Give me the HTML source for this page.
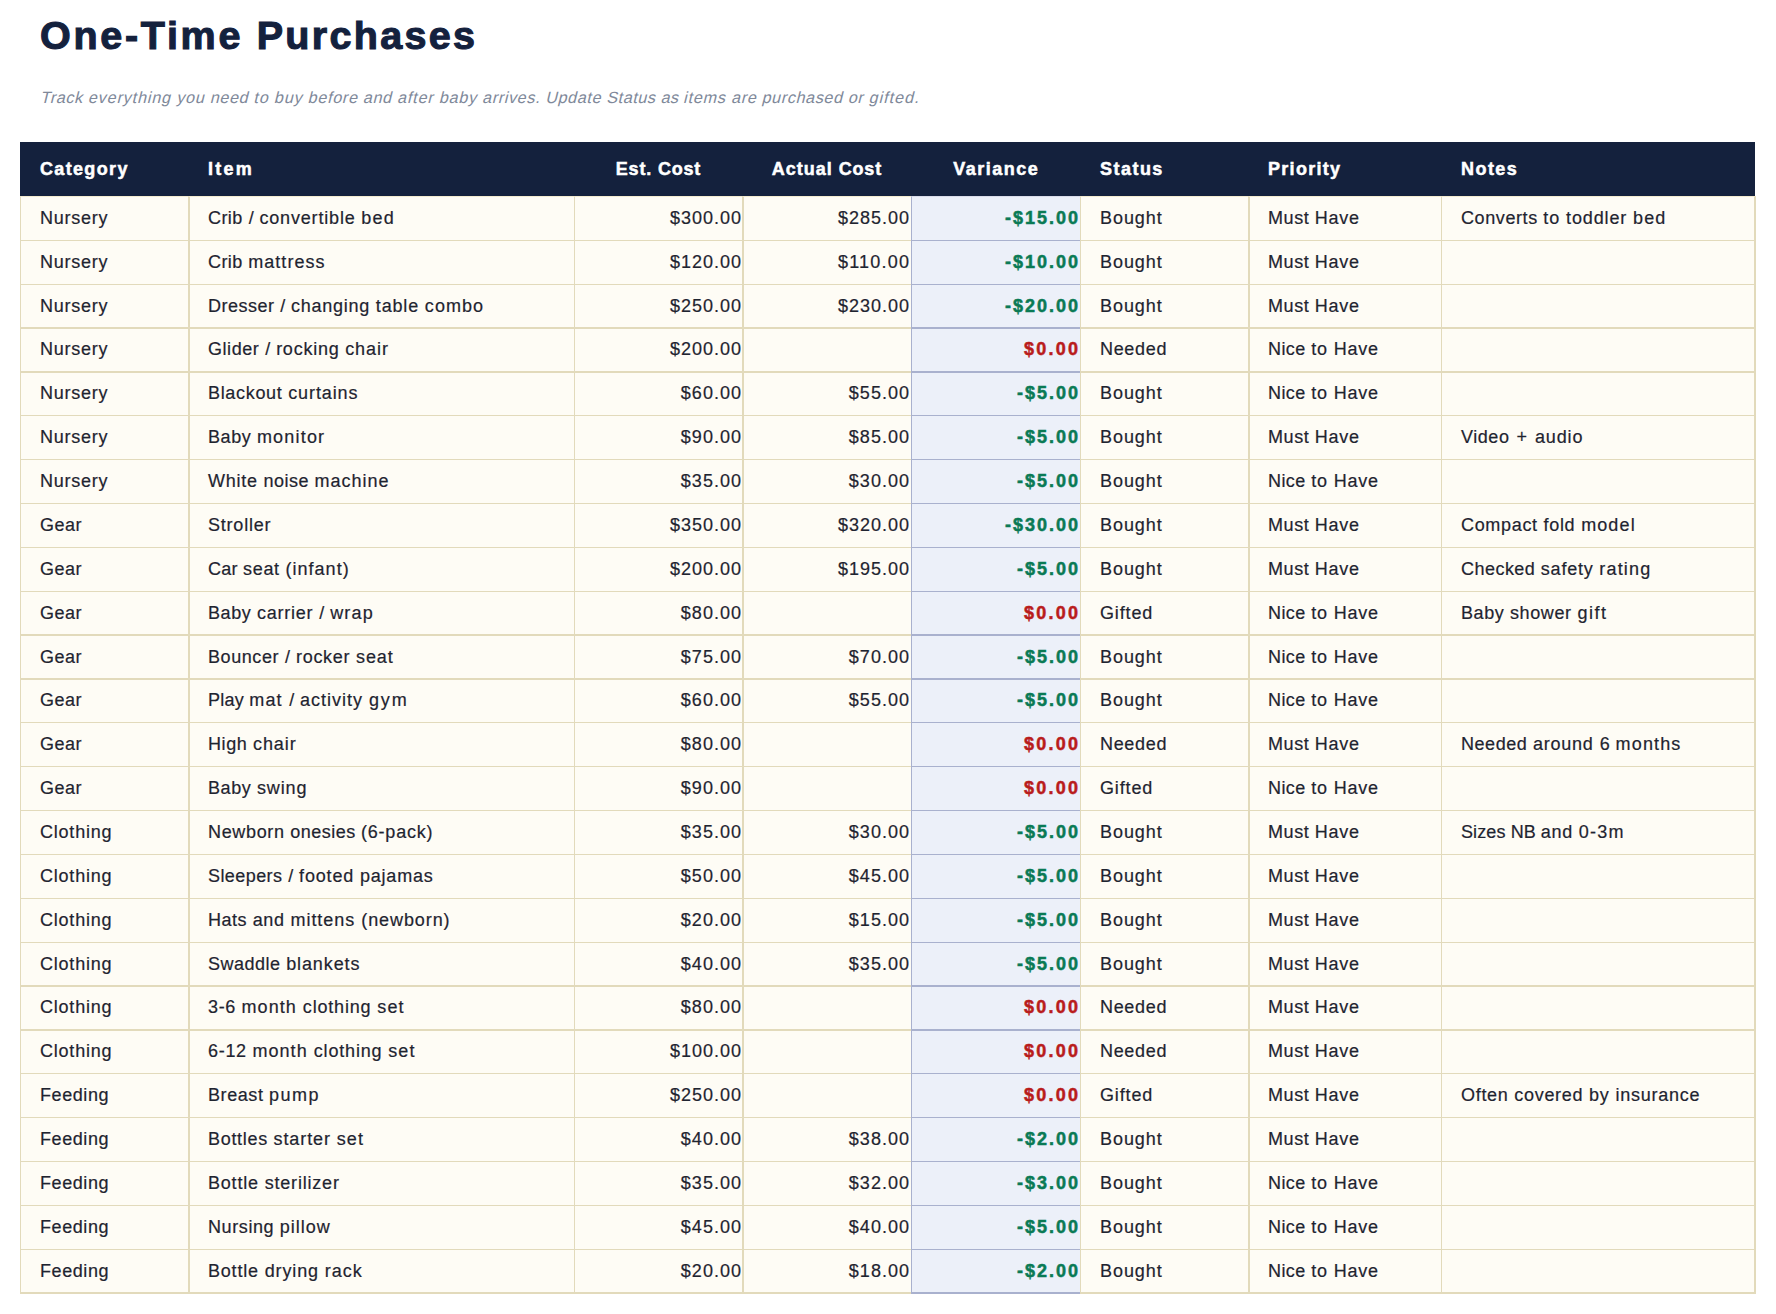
<!DOCTYPE html><html lang="en"><head><meta charset="utf-8"><title>One-Time Purchases</title><style>
*{box-sizing:border-box;margin:0;padding:0}
html,body{width:1776px;height:1314px;background:#fff;overflow:hidden}
body{font-family:"Liberation Sans", sans-serif;color:#1f2430;position:relative;}
h1{position:absolute;left:40px;top:7px;height:56px;line-height:56px;font-size:39.5px;font-weight:bold;color:#14213d;white-space:nowrap;-webkit-text-stroke:1.1px #14213d;}
p.sub{position:absolute;left:40px;top:83px;height:28px;line-height:28px;font-size:16.2px;font-style:normal;color:#80899a;white-space:nowrap;transform:skewX(-14.04deg);transform-origin:0 20px}
table{position:absolute;left:20px;top:142px;width:1736px;border-collapse:separate;border-spacing:0;table-layout:fixed;font-size:18px}
th,td{padding:0 0 0 19px;white-space:nowrap;overflow:hidden;text-align:left;vertical-align:top;line-height:20px}
th{background:#14213d;color:#fff;font-weight:bold;-webkit-text-stroke:0.5px #fff;height:54px;padding:17px 0 0 20px}
th.c{text-align:center;padding:17px 0 0 0}
td{-webkit-text-stroke:0.2px #1f2430;background:#fefcf5;border-left:1px solid #e2dabb;border-top:1px solid #e2dabb;height:44px;padding-top:11px}
td.n{text-align:right;padding:11px 1px 0 0}
td.v{background:#ecf0f9;border-left-color:#a9b1ce;border-top-color:#a9b1ce;font-weight:bold;text-align:right;padding:11px 2px 0 0}
td.b2{border-left-width:2px;padding-left:18px}
td.n.b2{padding-left:0;padding-right:2px}
td.last{border-right:2px solid #e2dabb}
th.last{border-right:1px solid #fff}
tr.first td{border-top-color:#f3ebd0}
tr.first td.v{border-top-color:#d9dcea}
tr.t2 td{border-top-width:2px;padding-top:10px}
tr.p1 td{padding-top:11px}
tr.h43 td{height:43px}
tr.h45 td{height:45px}
tr.end td{border-bottom:2px solid #e2dabb}
tr.end td.v{border-bottom-color:#a9b1ce}
.neg{color:#0a7a55;-webkit-text-stroke:0.5px currentColor;} .zero{color:#b91c1c;-webkit-text-stroke:0.5px currentColor;}
span{display:inline-block;position:relative;white-space:pre}
i{font-style:inherit}
</style></head><body>
<h1><span style="margin-right:-2.29px"><i style="letter-spacing:2.70px">One-Time </i><i style="letter-spacing:2.29px">Purchases</i></span></h1>
<p class="sub"><span style="margin-right:-0.98px"><i style="letter-spacing:0.56px">Track </i><i style="letter-spacing:0.85px">everything </i><i style="letter-spacing:0.70px">you </i><i style="letter-spacing:0.63px">need </i><i style="letter-spacing:0.83px">to </i><i style="letter-spacing:0.79px">buy </i><i style="letter-spacing:0.68px">before </i><i style="letter-spacing:0.65px">and </i><i style="letter-spacing:0.83px">after </i><i style="letter-spacing:0.73px">baby </i><i style="letter-spacing:0.62px">arrives. </i><i style="letter-spacing:0.62px">Update </i><i style="letter-spacing:0.56px">Status </i><i style="letter-spacing:0.30px">as </i><i style="letter-spacing:0.81px">items </i><i style="letter-spacing:0.61px">are </i><i style="letter-spacing:0.62px">purchased </i><i style="letter-spacing:0.63px">or </i><i style="letter-spacing:0.98px">gifted.</i></span></p>
<table><colgroup><col style="width:168px"><col style="width:386px"><col style="width:168px"><col style="width:169px"><col style="width:169px"><col style="width:168px"><col style="width:193px"><col style="width:315px"></colgroup>
<thead><tr>
<th><span style="letter-spacing:1.34px;margin-right:-1.34px">Category</span></th>
<th><span style="letter-spacing:2.22px;margin-right:-2.22px">Item</span></th>
<th class="c"><span style="margin-right:-0.79px"><i style="letter-spacing:0.84px">Est. </i><i style="letter-spacing:0.79px">Cost</i></span></th>
<th class="c"><span style="margin-right:-0.79px"><i style="letter-spacing:0.99px">Actual </i><i style="letter-spacing:0.79px">Cost</i></span></th>
<th class="c"><span style="letter-spacing:1.48px;margin-right:-1.48px">Variance</span></th>
<th><span style="letter-spacing:1.47px;margin-right:-1.47px">Status</span></th>
<th><span style="letter-spacing:1.29px;margin-right:-1.29px">Priority</span></th>
<th class="last"><span style="letter-spacing:1.45px;margin-right:-1.45px">Notes</span></th>
</tr></thead><tbody>
<tr class="first">
<td><span style="letter-spacing:0.76px;margin-right:-0.76px">Nursery</span></td>
<td class="b2"><span style="margin-right:-1.18px"><i style="letter-spacing:0.44px">Crib </i><i style="letter-spacing:0.42px;margin-left:0.42px">/ </i><i style="letter-spacing:0.82px">convertible </i><i style="letter-spacing:1.18px">bed</i></span></td>
<td class="n"><span style="letter-spacing:1.00px;margin-right:-1.00px">$300.00</span></td>
<td class="n b2"><span style="letter-spacing:1.00px;margin-right:-1.00px">$285.00</span></td>
<td class="v"><span class="neg" style="letter-spacing:1.98px;margin-right:-1.98px">-$15.00</span></td>
<td><span style="letter-spacing:0.94px;margin-right:-0.94px">Bought</span></td>
<td class="b2"><span style="margin-right:-0.72px"><i style="letter-spacing:0.57px">Must </i><i style="letter-spacing:0.72px">Have</i></span></td>
<td class="last"><span style="margin-right:-1.18px"><i style="letter-spacing:0.59px">Converts </i><i style="letter-spacing:0.90px">to </i><i style="letter-spacing:0.86px">toddler </i><i style="letter-spacing:1.18px">bed</i></span></td>
</tr>
<tr>
<td><span style="letter-spacing:0.76px;margin-right:-0.76px">Nursery</span></td>
<td class="b2"><span style="margin-right:-1.04px"><i style="letter-spacing:0.44px">Crib </i><i style="letter-spacing:1.04px">mattress</i></span></td>
<td class="n"><span style="letter-spacing:1.00px;margin-right:-1.00px">$120.00</span></td>
<td class="n b2"><span style="letter-spacing:1.22px;margin-right:-1.22px">$110.00</span></td>
<td class="v"><span class="neg" style="letter-spacing:1.98px;margin-right:-1.98px">-$10.00</span></td>
<td><span style="letter-spacing:0.94px;margin-right:-0.94px">Bought</span></td>
<td class="b2"><span style="margin-right:-0.72px"><i style="letter-spacing:0.57px">Must </i><i style="letter-spacing:0.72px">Have</i></span></td>
<td class="last"></td>
</tr>
<tr class="h43">
<td><span style="letter-spacing:0.76px;margin-right:-0.76px">Nursery</span></td>
<td class="b2"><span style="margin-right:-1.03px"><i style="letter-spacing:0.48px">Dresser </i><i style="letter-spacing:0.42px;margin-left:0.42px">/ </i><i style="letter-spacing:0.74px">changing </i><i style="letter-spacing:0.83px">table </i><i style="letter-spacing:1.03px">combo</i></span></td>
<td class="n"><span style="letter-spacing:1.00px;margin-right:-1.00px">$250.00</span></td>
<td class="n b2"><span style="letter-spacing:1.00px;margin-right:-1.00px">$230.00</span></td>
<td class="v"><span class="neg" style="letter-spacing:1.98px;margin-right:-1.98px">-$20.00</span></td>
<td><span style="letter-spacing:0.94px;margin-right:-0.94px">Bought</span></td>
<td class="b2"><span style="margin-right:-0.72px"><i style="letter-spacing:0.57px">Must </i><i style="letter-spacing:0.72px">Have</i></span></td>
<td class="last"></td>
</tr>
<tr class="t2">
<td><span style="letter-spacing:0.76px;margin-right:-0.76px">Nursery</span></td>
<td class="b2"><span style="margin-right:-0.93px"><i style="letter-spacing:0.55px">Glider </i><i style="letter-spacing:0.42px;margin-left:0.42px">/ </i><i style="letter-spacing:0.75px">rocking </i><i style="letter-spacing:0.93px">chair</i></span></td>
<td class="n"><span style="letter-spacing:1.00px;margin-right:-1.00px">$200.00</span></td>
<td class="n b2"></td>
<td class="v"><span class="zero" style="letter-spacing:2.21px;margin-right:-2.21px">$0.00</span></td>
<td><span style="letter-spacing:0.67px;margin-right:-0.67px">Needed</span></td>
<td class="b2"><span style="margin-right:-0.72px"><i style="letter-spacing:0.42px">Nice </i><i style="letter-spacing:0.90px">to </i><i style="letter-spacing:0.72px">Have</i></span></td>
<td class="last"></td>
</tr>
<tr class="t2">
<td><span style="letter-spacing:0.76px;margin-right:-0.76px">Nursery</span></td>
<td class="b2"><span style="margin-right:-0.90px"><i style="letter-spacing:0.68px">Blackout </i><i style="letter-spacing:0.90px">curtains</i></span></td>
<td class="n"><span style="letter-spacing:1.02px;margin-right:-1.02px">$60.00</span></td>
<td class="n b2"><span style="letter-spacing:1.02px;margin-right:-1.02px">$55.00</span></td>
<td class="v"><span class="neg" style="letter-spacing:1.99px;margin-right:-1.99px">-$5.00</span></td>
<td><span style="letter-spacing:0.94px;margin-right:-0.94px">Bought</span></td>
<td class="b2"><span style="margin-right:-0.72px"><i style="letter-spacing:0.42px">Nice </i><i style="letter-spacing:0.90px">to </i><i style="letter-spacing:0.72px">Have</i></span></td>
<td class="last"></td>
</tr>
<tr>
<td><span style="letter-spacing:0.76px;margin-right:-0.76px">Nursery</span></td>
<td class="b2"><span style="margin-right:-1.20px"><i style="letter-spacing:0.57px">Baby </i><i style="letter-spacing:1.20px">monitor</i></span></td>
<td class="n"><span style="letter-spacing:1.02px;margin-right:-1.02px">$90.00</span></td>
<td class="n b2"><span style="letter-spacing:1.02px;margin-right:-1.02px">$85.00</span></td>
<td class="v"><span class="neg" style="letter-spacing:1.99px;margin-right:-1.99px">-$5.00</span></td>
<td><span style="letter-spacing:0.94px;margin-right:-0.94px">Bought</span></td>
<td class="b2"><span style="margin-right:-0.72px"><i style="letter-spacing:0.57px">Must </i><i style="letter-spacing:0.72px">Have</i></span></td>
<td class="last"><span style="margin-right:-0.90px"><i style="letter-spacing:0.55px">Video </i><i style="letter-spacing:1.45px;margin-left:1.45px">+ </i><i style="letter-spacing:0.90px">audio</i></span></td>
</tr>
<tr>
<td><span style="letter-spacing:0.76px;margin-right:-0.76px">Nursery</span></td>
<td class="b2"><span style="margin-right:-0.97px"><i style="letter-spacing:0.74px">White </i><i style="letter-spacing:0.52px">noise </i><i style="letter-spacing:0.97px">machine</i></span></td>
<td class="n"><span style="letter-spacing:1.02px;margin-right:-1.02px">$35.00</span></td>
<td class="n b2"><span style="letter-spacing:1.02px;margin-right:-1.02px">$30.00</span></td>
<td class="v"><span class="neg" style="letter-spacing:1.99px;margin-right:-1.99px">-$5.00</span></td>
<td><span style="letter-spacing:0.94px;margin-right:-0.94px">Bought</span></td>
<td class="b2"><span style="margin-right:-0.72px"><i style="letter-spacing:0.42px">Nice </i><i style="letter-spacing:0.90px">to </i><i style="letter-spacing:0.72px">Have</i></span></td>
<td class="last"></td>
</tr>
<tr>
<td><span style="letter-spacing:0.49px;margin-right:-0.49px">Gear</span></td>
<td class="b2"><span style="letter-spacing:0.78px;margin-right:-0.78px">Stroller</span></td>
<td class="n"><span style="letter-spacing:1.00px;margin-right:-1.00px">$350.00</span></td>
<td class="n b2"><span style="letter-spacing:1.00px;margin-right:-1.00px">$320.00</span></td>
<td class="v"><span class="neg" style="letter-spacing:1.98px;margin-right:-1.98px">-$30.00</span></td>
<td><span style="letter-spacing:0.94px;margin-right:-0.94px">Bought</span></td>
<td class="b2"><span style="margin-right:-0.72px"><i style="letter-spacing:0.57px">Must </i><i style="letter-spacing:0.72px">Have</i></span></td>
<td class="last"><span style="margin-right:-1.12px"><i style="letter-spacing:0.67px">Compact </i><i style="letter-spacing:0.74px">fold </i><i style="letter-spacing:1.12px">model</i></span></td>
</tr>
<tr>
<td><span style="letter-spacing:0.49px;margin-right:-0.49px">Gear</span></td>
<td class="b2"><span style="margin-right:-1.04px"><i style="letter-spacing:0.27px">Car </i><i style="letter-spacing:0.65px">seat </i><i style="letter-spacing:1.04px">(infant)</i></span></td>
<td class="n"><span style="letter-spacing:1.00px;margin-right:-1.00px">$200.00</span></td>
<td class="n b2"><span style="letter-spacing:1.00px;margin-right:-1.00px">$195.00</span></td>
<td class="v"><span class="neg" style="letter-spacing:1.99px;margin-right:-1.99px">-$5.00</span></td>
<td><span style="letter-spacing:0.94px;margin-right:-0.94px">Bought</span></td>
<td class="b2"><span style="margin-right:-0.72px"><i style="letter-spacing:0.57px">Must </i><i style="letter-spacing:0.72px">Have</i></span></td>
<td class="last"><span style="margin-right:-1.18px"><i style="letter-spacing:0.47px">Checked </i><i style="letter-spacing:0.78px">safety </i><i style="letter-spacing:1.18px">rating</i></span></td>
</tr>
<tr class="h43">
<td><span style="letter-spacing:0.49px;margin-right:-0.49px">Gear</span></td>
<td class="b2"><span style="margin-right:-1.19px"><i style="letter-spacing:0.57px">Baby </i><i style="letter-spacing:0.75px">carrier </i><i style="letter-spacing:0.42px;margin-left:0.42px">/ </i><i style="letter-spacing:1.19px">wrap</i></span></td>
<td class="n"><span style="letter-spacing:1.02px;margin-right:-1.02px">$80.00</span></td>
<td class="n b2"></td>
<td class="v"><span class="zero" style="letter-spacing:2.21px;margin-right:-2.21px">$0.00</span></td>
<td><span style="letter-spacing:0.87px;margin-right:-0.87px">Gifted</span></td>
<td class="b2"><span style="margin-right:-0.72px"><i style="letter-spacing:0.42px">Nice </i><i style="letter-spacing:0.90px">to </i><i style="letter-spacing:0.72px">Have</i></span></td>
<td class="last"><span style="margin-right:-1.49px"><i style="letter-spacing:0.57px">Baby </i><i style="letter-spacing:0.64px">shower </i><i style="letter-spacing:1.49px">gift</i></span></td>
</tr>
<tr class="t2 p1">
<td><span style="letter-spacing:0.49px;margin-right:-0.49px">Gear</span></td>
<td class="b2"><span style="margin-right:-0.93px"><i style="letter-spacing:0.58px">Bouncer </i><i style="letter-spacing:0.42px;margin-left:0.42px">/ </i><i style="letter-spacing:0.72px">rocker </i><i style="letter-spacing:0.93px">seat</i></span></td>
<td class="n"><span style="letter-spacing:1.02px;margin-right:-1.02px">$75.00</span></td>
<td class="n b2"><span style="letter-spacing:1.02px;margin-right:-1.02px">$70.00</span></td>
<td class="v"><span class="neg" style="letter-spacing:1.99px;margin-right:-1.99px">-$5.00</span></td>
<td><span style="letter-spacing:0.94px;margin-right:-0.94px">Bought</span></td>
<td class="b2"><span style="margin-right:-0.72px"><i style="letter-spacing:0.42px">Nice </i><i style="letter-spacing:0.90px">to </i><i style="letter-spacing:0.72px">Have</i></span></td>
<td class="last"></td>
</tr>
<tr class="t2">
<td><span style="letter-spacing:0.49px;margin-right:-0.49px">Gear</span></td>
<td class="b2"><span style="margin-right:-1.91px"><i style="letter-spacing:0.26px">Play </i><i style="letter-spacing:1.12px">mat </i><i style="letter-spacing:0.42px;margin-left:0.42px">/ </i><i style="letter-spacing:0.98px">activity </i><i style="letter-spacing:1.91px">gym</i></span></td>
<td class="n"><span style="letter-spacing:1.02px;margin-right:-1.02px">$60.00</span></td>
<td class="n b2"><span style="letter-spacing:1.02px;margin-right:-1.02px">$55.00</span></td>
<td class="v"><span class="neg" style="letter-spacing:1.99px;margin-right:-1.99px">-$5.00</span></td>
<td><span style="letter-spacing:0.94px;margin-right:-0.94px">Bought</span></td>
<td class="b2"><span style="margin-right:-0.72px"><i style="letter-spacing:0.42px">Nice </i><i style="letter-spacing:0.90px">to </i><i style="letter-spacing:0.72px">Have</i></span></td>
<td class="last"></td>
</tr>
<tr>
<td><span style="letter-spacing:0.49px;margin-right:-0.49px">Gear</span></td>
<td class="b2"><span style="margin-right:-0.93px"><i style="letter-spacing:0.59px">High </i><i style="letter-spacing:0.93px">chair</i></span></td>
<td class="n"><span style="letter-spacing:1.02px;margin-right:-1.02px">$80.00</span></td>
<td class="n b2"></td>
<td class="v"><span class="zero" style="letter-spacing:2.21px;margin-right:-2.21px">$0.00</span></td>
<td><span style="letter-spacing:0.67px;margin-right:-0.67px">Needed</span></td>
<td class="b2"><span style="margin-right:-0.72px"><i style="letter-spacing:0.57px">Must </i><i style="letter-spacing:0.72px">Have</i></span></td>
<td class="last"><span style="margin-right:-1.14px"><i style="letter-spacing:0.55px">Needed </i><i style="letter-spacing:0.75px">around </i><i style="letter-spacing:0.46px;margin-left:0.46px">6 </i><i style="letter-spacing:1.14px">months</i></span></td>
</tr>
<tr>
<td><span style="letter-spacing:0.49px;margin-right:-0.49px">Gear</span></td>
<td class="b2"><span style="margin-right:-0.89px"><i style="letter-spacing:0.57px">Baby </i><i style="letter-spacing:0.89px">swing</i></span></td>
<td class="n"><span style="letter-spacing:1.02px;margin-right:-1.02px">$90.00</span></td>
<td class="n b2"></td>
<td class="v"><span class="zero" style="letter-spacing:2.21px;margin-right:-2.21px">$0.00</span></td>
<td><span style="letter-spacing:0.87px;margin-right:-0.87px">Gifted</span></td>
<td class="b2"><span style="margin-right:-0.72px"><i style="letter-spacing:0.42px">Nice </i><i style="letter-spacing:0.90px">to </i><i style="letter-spacing:0.72px">Have</i></span></td>
<td class="last"></td>
</tr>
<tr>
<td><span style="letter-spacing:0.78px;margin-right:-0.78px">Clothing</span></td>
<td class="b2"><span style="margin-right:-0.77px"><i style="letter-spacing:0.66px">Newborn </i><i style="letter-spacing:0.46px">onesies </i><i style="letter-spacing:0.77px">(6-pack)</i></span></td>
<td class="n"><span style="letter-spacing:1.02px;margin-right:-1.02px">$35.00</span></td>
<td class="n b2"><span style="letter-spacing:1.02px;margin-right:-1.02px">$30.00</span></td>
<td class="v"><span class="neg" style="letter-spacing:1.99px;margin-right:-1.99px">-$5.00</span></td>
<td><span style="letter-spacing:0.94px;margin-right:-0.94px">Bought</span></td>
<td class="b2"><span style="margin-right:-0.72px"><i style="letter-spacing:0.57px">Must </i><i style="letter-spacing:0.72px">Have</i></span></td>
<td class="last"><span style="margin-right:-1.27px"><i style="letter-spacing:0.11px">Sizes </i><i style="letter-spacing:0.04px">NB </i><i style="letter-spacing:0.69px">and </i><i style="letter-spacing:1.27px">0-3m</i></span></td>
</tr>
<tr>
<td><span style="letter-spacing:0.78px;margin-right:-0.78px">Clothing</span></td>
<td class="b2"><span style="margin-right:-0.82px"><i style="letter-spacing:0.42px">Sleepers </i><i style="letter-spacing:0.42px;margin-left:0.42px">/ </i><i style="letter-spacing:0.82px">footed </i><i style="letter-spacing:0.82px">pajamas</i></span></td>
<td class="n"><span style="letter-spacing:1.02px;margin-right:-1.02px">$50.00</span></td>
<td class="n b2"><span style="letter-spacing:1.02px;margin-right:-1.02px">$45.00</span></td>
<td class="v"><span class="neg" style="letter-spacing:1.99px;margin-right:-1.99px">-$5.00</span></td>
<td><span style="letter-spacing:0.94px;margin-right:-0.94px">Bought</span></td>
<td class="b2"><span style="margin-right:-0.72px"><i style="letter-spacing:0.57px">Must </i><i style="letter-spacing:0.72px">Have</i></span></td>
<td class="last"></td>
</tr>
<tr>
<td><span style="letter-spacing:0.78px;margin-right:-0.78px">Clothing</span></td>
<td class="b2"><span style="margin-right:-0.91px"><i style="letter-spacing:0.52px">Hats </i><i style="letter-spacing:0.69px">and </i><i style="letter-spacing:0.98px">mittens </i><i style="letter-spacing:0.91px">(newborn)</i></span></td>
<td class="n"><span style="letter-spacing:1.02px;margin-right:-1.02px">$20.00</span></td>
<td class="n b2"><span style="letter-spacing:1.02px;margin-right:-1.02px">$15.00</span></td>
<td class="v"><span class="neg" style="letter-spacing:1.99px;margin-right:-1.99px">-$5.00</span></td>
<td><span style="letter-spacing:0.94px;margin-right:-0.94px">Bought</span></td>
<td class="b2"><span style="margin-right:-0.72px"><i style="letter-spacing:0.57px">Must </i><i style="letter-spacing:0.72px">Have</i></span></td>
<td class="last"></td>
</tr>
<tr class="h43">
<td><span style="letter-spacing:0.78px;margin-right:-0.78px">Clothing</span></td>
<td class="b2"><span style="margin-right:-0.90px"><i style="letter-spacing:0.51px">Swaddle </i><i style="letter-spacing:0.90px">blankets</i></span></td>
<td class="n"><span style="letter-spacing:1.02px;margin-right:-1.02px">$40.00</span></td>
<td class="n b2"><span style="letter-spacing:1.02px;margin-right:-1.02px">$35.00</span></td>
<td class="v"><span class="neg" style="letter-spacing:1.99px;margin-right:-1.99px">-$5.00</span></td>
<td><span style="letter-spacing:0.94px;margin-right:-0.94px">Bought</span></td>
<td class="b2"><span style="margin-right:-0.72px"><i style="letter-spacing:0.57px">Must </i><i style="letter-spacing:0.72px">Have</i></span></td>
<td class="last"></td>
</tr>
<tr class="t2">
<td><span style="letter-spacing:0.78px;margin-right:-0.78px">Clothing</span></td>
<td class="b2"><span style="margin-right:-1.13px"><i style="letter-spacing:0.63px">3-6 </i><i style="letter-spacing:1.04px">month </i><i style="letter-spacing:0.82px">clothing </i><i style="letter-spacing:1.13px">set</i></span></td>
<td class="n"><span style="letter-spacing:1.02px;margin-right:-1.02px">$80.00</span></td>
<td class="n b2"></td>
<td class="v"><span class="zero" style="letter-spacing:2.21px;margin-right:-2.21px">$0.00</span></td>
<td><span style="letter-spacing:0.67px;margin-right:-0.67px">Needed</span></td>
<td class="b2"><span style="margin-right:-0.72px"><i style="letter-spacing:0.57px">Must </i><i style="letter-spacing:0.72px">Have</i></span></td>
<td class="last"></td>
</tr>
<tr class="t2">
<td><span style="letter-spacing:0.78px;margin-right:-0.78px">Clothing</span></td>
<td class="b2"><span style="margin-right:-1.13px"><i style="letter-spacing:0.69px">6-12 </i><i style="letter-spacing:1.04px">month </i><i style="letter-spacing:0.82px">clothing </i><i style="letter-spacing:1.13px">set</i></span></td>
<td class="n"><span style="letter-spacing:1.00px;margin-right:-1.00px">$100.00</span></td>
<td class="n b2"></td>
<td class="v"><span class="zero" style="letter-spacing:2.21px;margin-right:-2.21px">$0.00</span></td>
<td><span style="letter-spacing:0.67px;margin-right:-0.67px">Needed</span></td>
<td class="b2"><span style="margin-right:-0.72px"><i style="letter-spacing:0.57px">Must </i><i style="letter-spacing:0.72px">Have</i></span></td>
<td class="last"></td>
</tr>
<tr>
<td><span style="letter-spacing:0.58px;margin-right:-0.58px">Feeding</span></td>
<td class="b2"><span style="margin-right:-1.48px"><i style="letter-spacing:0.58px">Breast </i><i style="letter-spacing:1.48px">pump</i></span></td>
<td class="n"><span style="letter-spacing:1.00px;margin-right:-1.00px">$250.00</span></td>
<td class="n b2"></td>
<td class="v"><span class="zero" style="letter-spacing:2.21px;margin-right:-2.21px">$0.00</span></td>
<td><span style="letter-spacing:0.87px;margin-right:-0.87px">Gifted</span></td>
<td class="b2"><span style="margin-right:-0.72px"><i style="letter-spacing:0.57px">Must </i><i style="letter-spacing:0.72px">Have</i></span></td>
<td class="last"><span style="margin-right:-0.75px"><i style="letter-spacing:0.70px">Often </i><i style="letter-spacing:0.71px">covered </i><i style="letter-spacing:0.84px">by </i><i style="letter-spacing:0.75px">insurance</i></span></td>
</tr>
<tr>
<td><span style="letter-spacing:0.58px;margin-right:-0.58px">Feeding</span></td>
<td class="b2"><span style="margin-right:-1.13px"><i style="letter-spacing:0.69px">Bottles </i><i style="letter-spacing:0.89px">starter </i><i style="letter-spacing:1.13px">set</i></span></td>
<td class="n"><span style="letter-spacing:1.02px;margin-right:-1.02px">$40.00</span></td>
<td class="n b2"><span style="letter-spacing:1.02px;margin-right:-1.02px">$38.00</span></td>
<td class="v"><span class="neg" style="letter-spacing:1.99px;margin-right:-1.99px">-$2.00</span></td>
<td><span style="letter-spacing:0.94px;margin-right:-0.94px">Bought</span></td>
<td class="b2"><span style="margin-right:-0.72px"><i style="letter-spacing:0.57px">Must </i><i style="letter-spacing:0.72px">Have</i></span></td>
<td class="last"></td>
</tr>
<tr>
<td><span style="letter-spacing:0.58px;margin-right:-0.58px">Feeding</span></td>
<td class="b2"><span style="margin-right:-0.81px"><i style="letter-spacing:0.80px">Bottle </i><i style="letter-spacing:0.81px">sterilizer</i></span></td>
<td class="n"><span style="letter-spacing:1.02px;margin-right:-1.02px">$35.00</span></td>
<td class="n b2"><span style="letter-spacing:1.02px;margin-right:-1.02px">$32.00</span></td>
<td class="v"><span class="neg" style="letter-spacing:1.99px;margin-right:-1.99px">-$3.00</span></td>
<td><span style="letter-spacing:0.94px;margin-right:-0.94px">Bought</span></td>
<td class="b2"><span style="margin-right:-0.72px"><i style="letter-spacing:0.42px">Nice </i><i style="letter-spacing:0.90px">to </i><i style="letter-spacing:0.72px">Have</i></span></td>
<td class="last"></td>
</tr>
<tr>
<td><span style="letter-spacing:0.58px;margin-right:-0.58px">Feeding</span></td>
<td class="b2"><span style="margin-right:-0.96px"><i style="letter-spacing:0.60px">Nursing </i><i style="letter-spacing:0.96px">pillow</i></span></td>
<td class="n"><span style="letter-spacing:1.02px;margin-right:-1.02px">$45.00</span></td>
<td class="n b2"><span style="letter-spacing:1.02px;margin-right:-1.02px">$40.00</span></td>
<td class="v"><span class="neg" style="letter-spacing:1.99px;margin-right:-1.99px">-$5.00</span></td>
<td><span style="letter-spacing:0.94px;margin-right:-0.94px">Bought</span></td>
<td class="b2"><span style="margin-right:-0.72px"><i style="letter-spacing:0.42px">Nice </i><i style="letter-spacing:0.90px">to </i><i style="letter-spacing:0.72px">Have</i></span></td>
<td class="last"></td>
</tr>
<tr class="end h45">
<td><span style="letter-spacing:0.58px;margin-right:-0.58px">Feeding</span></td>
<td class="b2"><span style="margin-right:-1.00px"><i style="letter-spacing:0.80px">Bottle </i><i style="letter-spacing:0.88px">drying </i><i style="letter-spacing:1.00px">rack</i></span></td>
<td class="n"><span style="letter-spacing:1.02px;margin-right:-1.02px">$20.00</span></td>
<td class="n b2"><span style="letter-spacing:1.02px;margin-right:-1.02px">$18.00</span></td>
<td class="v"><span class="neg" style="letter-spacing:1.99px;margin-right:-1.99px">-$2.00</span></td>
<td><span style="letter-spacing:0.94px;margin-right:-0.94px">Bought</span></td>
<td class="b2"><span style="margin-right:-0.72px"><i style="letter-spacing:0.42px">Nice </i><i style="letter-spacing:0.90px">to </i><i style="letter-spacing:0.72px">Have</i></span></td>
<td class="last"></td>
</tr>
</tbody></table></body></html>
